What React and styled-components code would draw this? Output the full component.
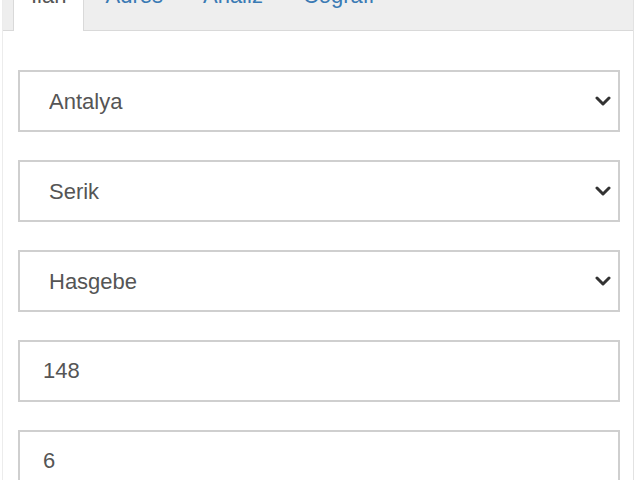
import React from 'react'
import styled, { createGlobalStyle } from 'styled-components'

const GlobalStyle = createGlobalStyle`
    html, body {
        margin: 0;
        padding: 0;
        background: #ffffff;
        font-family: "Liberation Sans", Arial, sans-serif;
    }
`

const Panel = styled.div`
    width: 630px;
    height: 480px;
    overflow: hidden;
    border-left: 1px solid #ececec;
    border-right: 1px solid #e2e2e2;
    margin-left: 2px;
`

const TabBar = styled.ul`
    display: flex;
    gap: 2px;
    list-style: none;
    margin: -17px 0 0 0;
    padding: 0 0 0 10px;
    height: 47px;
    background: #eeeeee;
    border-bottom: 1px solid #d9d9d9;
`

const Tab = styled.li`
    padding: 0 ${p => (p.active ? '17px' : '18px')};
    line-height: 24px;
    font-size: 22px;
    color: ${p => (p.active ? '#555555' : '#3a7ab4')};
    background: ${p => (p.active ? '#ffffff' : 'transparent')};
    border: 1px solid ${p => (p.active ? '#d9d9d9' : 'transparent')};
    border-bottom: none;
    margin-bottom: ${p => (p.active ? '-1px' : '0')};
    cursor: pointer;
`

const Form = styled.div`
    display: flex;
    flex-direction: column;
    gap: 28px;
    padding: 39px 13px 0 15px;
`

const Field = styled.div`
    position: relative;
    height: 62px;
`

const Select = styled.select`
    appearance: none;
    width: 100%;
    height: 100%;
    box-sizing: border-box;
    border: 2px solid #cfcfcf;
    border-radius: 0;
    background: #ffffff;
    padding: 0 40px 0 29px;
    font-family: "Liberation Sans", Arial, sans-serif;
    font-size: 22px;
    color: #555555;
    outline: none;
`

const Input = styled.input`
    width: 100%;
    height: 100%;
    box-sizing: border-box;
    border: 2px solid #cfcfcf;
    border-radius: 0;
    padding: 0 23px;
    font-family: "Liberation Sans", Arial, sans-serif;
    font-size: 22px;
    color: #555555;
    outline: none;
`

const Chevron = styled.svg`
    position: absolute;
    right: 9px;
    top: 50%;
    margin-top: -6px;
    width: 16px;
    height: 12px;
    pointer-events: none;
`

const SelectField = ({ value, options }) => (
    <Field>
        <Select defaultValue={value}>
            {options.map(o => <option key={o}>{o}</option>)}
        </Select>
        <Chevron viewBox="0 0 16 12">
            <path d="M2 3 L8 9 L14 3" fill="none" stroke="#333333" strokeWidth="3" strokeLinecap="round" strokeLinejoin="round" />
        </Chevron>
    </Field>
)

export default function App() {
    return (
        <>
            <GlobalStyle />
            <Panel>
                <TabBar>
                    <Tab active>İlan</Tab>
                    <Tab>Adres</Tab>
                    <Tab>Analiz</Tab>
                    <Tab>Coğrafi</Tab>
                </TabBar>
                <Form>
                    <SelectField value="Antalya" options={['Antalya', 'Muğla', 'İzmir']} />
                    <SelectField value="Serik" options={['Serik', 'Manavgat', 'Alanya']} />
                    <SelectField value="Hasgebe" options={['Hasgebe', 'Belek', 'Kadriye']} />
                    <Field>
                        <Input defaultValue="148" />
                    </Field>
                    <Field>
                        <Input defaultValue="6" />
                    </Field>
                </Form>
            </Panel>
        </>
    )
}
